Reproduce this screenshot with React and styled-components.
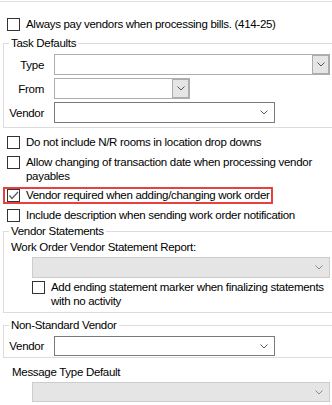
import React from "react";
import styled, { createGlobalStyle } from "styled-components";

const GlobalStyle = createGlobalStyle`
  body {
    margin: 0;
    background: #ffffff;
    font-family: "Liberation Sans", Arial, sans-serif;
    font-size: 11.5px;
    letter-spacing: -0.3px;
    color: #000000;
  }
`;

const Page = styled.div`
  width: 332px;
  height: 405px;
  overflow: hidden;
  background: #ffffff;
  padding-top: 1px;
  box-sizing: border-box;
  line-height: 14px;
`;

const TopRule = styled.div`
  border-top: 1px solid #e3e3e3;
`;

const CheckRow = styled.div`
  position: relative;
  display: flex;
  align-items: flex-start;
  width: fit-content;
  margin: ${({ $mt }) => $mt || 0}px 0 0 ${({ $ml }) => ($ml == null ? 7 : $ml)}px;

  ${({ $highlight }) =>
    $highlight &&
    `
    &::after {
      content: "";
      position: absolute;
      left: -4px;
      top: -1px;
      right: -3px;
      bottom: -2px;
      border: 2px solid #e8403f;
      pointer-events: none;
    }
  `}
`;

const Box = styled.span`
  flex: none;
  width: 13px;
  height: 13px;
  box-sizing: border-box;
  margin-top: 1px;
  border: 1px solid #333333;
  background: #ffffff;
  display: flex;
  align-items: center;
  justify-content: center;
`;

const CheckText = styled.span`
  margin-left: 6px;
  white-space: nowrap;
`;

const Group = styled.fieldset`
  margin: ${({ $mt }) => $mt}px 0 0 3px;
  padding: ${({ $pt }) => $pt}px 0 ${({ $pb }) => $pb}px 0;
  border: 1px solid #dcdcdc;
  border-right: none;
  min-width: 0;
`;

const Legend = styled.legend`
  margin-left: 5px;
  padding: 0 2px;
  line-height: 14px;
`;

const FieldGrid = styled.div`
  display: grid;
  grid-template-columns: 40px auto;
  column-gap: 10px;
  row-gap: 3px;
  align-items: center;
  justify-content: start;
`;

const FieldLabel = styled.span`
  text-align: right;
  white-space: nowrap;
`;

const Combo = styled.div`
  display: flex;
  justify-content: flex-end;
  align-items: center;
  box-sizing: border-box;
  width: ${({ $w }) => $w}px;
  height: ${({ $h }) => $h || 21}px;
  margin: ${({ $mt }) => $mt || 0}px 0 0 ${({ $ml }) => $ml || 0}px;
  background: ${({ $variant }) => ($variant === "disabled" ? "#e5e5e5" : "#ffffff")};
  border: 1px solid
    ${({ $variant }) =>
      $variant === "flat" ? "#7a7a7a" : $variant === "disabled" ? "#cccccc" : "#abadb3"};
`;

const DropButton = styled.span`
  display: flex;
  align-items: center;
  justify-content: center;
  box-sizing: border-box;
  width: 17px;
  height: 100%;
  ${({ $boxed }) =>
    $boxed
      ? `
    background: #e5e5e5;
    border: 1px solid #acacac;
  `
      : `
    margin-right: 2px;
  `}
`;

const Caption = styled.div`
  padding-left: ${({ $pl }) => $pl}px;
  margin-top: ${({ $mt }) => $mt || 0}px;
  white-space: nowrap;
`;

const Chevron = ({ color = "#555" }) => (
  <svg width="8" height="5" viewBox="0 0 8 5">
    <polyline points="0.5,0.5 4,4 7.5,0.5" fill="none" stroke={color} strokeWidth="1" />
  </svg>
);

const Check = () => (
  <svg width="11" height="11" viewBox="0 0 11 11">
    <polyline points="1.5,5.5 4,8.5 10,2" fill="none" stroke="#5a5a5a" strokeWidth="1.2" />
  </svg>
);

const CheckItem = ({ checked, children, ...rest }) => (
  <CheckRow {...rest}>
    <Box>{checked && <Check />}</Box>
    <CheckText>{children}</CheckText>
  </CheckRow>
);

const ComboBox = ({ variant, ...rest }) => (
  <Combo $variant={variant} {...rest}>
    <DropButton $boxed={variant === "boxed"}>
      <Chevron color={variant === "disabled" ? "#8a8a8a" : "#555"} />
    </DropButton>
  </Combo>
);

export default function App() {
  return (
    <Page>
      <GlobalStyle />
      <TopRule />
      <CheckItem $mt={15}>Always pay vendors when processing bills. (414-25)</CheckItem>

      <Group $mt={5} $pt={4} $pb={4}>
        <Legend>Task Defaults</Legend>
        <FieldGrid>
          <FieldLabel>Type</FieldLabel>
          <ComboBox variant="boxed" $w={276} />
          <FieldLabel>From</FieldLabel>
          <ComboBox variant="boxed" $w={136} />
          <FieldLabel>Vendor</FieldLabel>
          <ComboBox variant="flat" $w={221} />
        </FieldGrid>
      </Group>

      <CheckItem $mt={7}>Do not include N/R rooms in location drop downs</CheckItem>
      <CheckItem $mt={6}>
        Allow changing of transaction date when processing vendor
        <br />
        payables
      </CheckItem>
      <CheckItem $mt={5} checked $highlight>
        Vendor required when adding/changing work order
      </CheckItem>
      <CheckItem $mt={6}>Include description when sending work order notification</CheckItem>

      <Group $mt={2} $pt={2} $pb={4}>
        <Legend>Vendor Statements</Legend>
        <Caption $pl={7}>Work Order Vendor Statement Report:</Caption>
        <ComboBox variant="disabled" $w={298} $ml={28} $mt={3} />
        <CheckItem $mt={2} $ml={28}>
          Add ending statement marker when finalizing statements
          <br />
          with no activity
        </CheckItem>
      </Group>

      <Group $mt={5} $pt={4} $pb={1}>
        <Legend>Non-Standard Vendor</Legend>
        <FieldGrid>
          <FieldLabel>Vendor</FieldLabel>
          <ComboBox variant="flat" $w={221} $h={20} />
        </FieldGrid>
      </Group>

      <Caption $pl={12} $mt={7}>Message Type Default</Caption>
      <ComboBox variant="disabled" $w={298} $h={20} $ml={32} $mt={3} />
    </Page>
  );
}
